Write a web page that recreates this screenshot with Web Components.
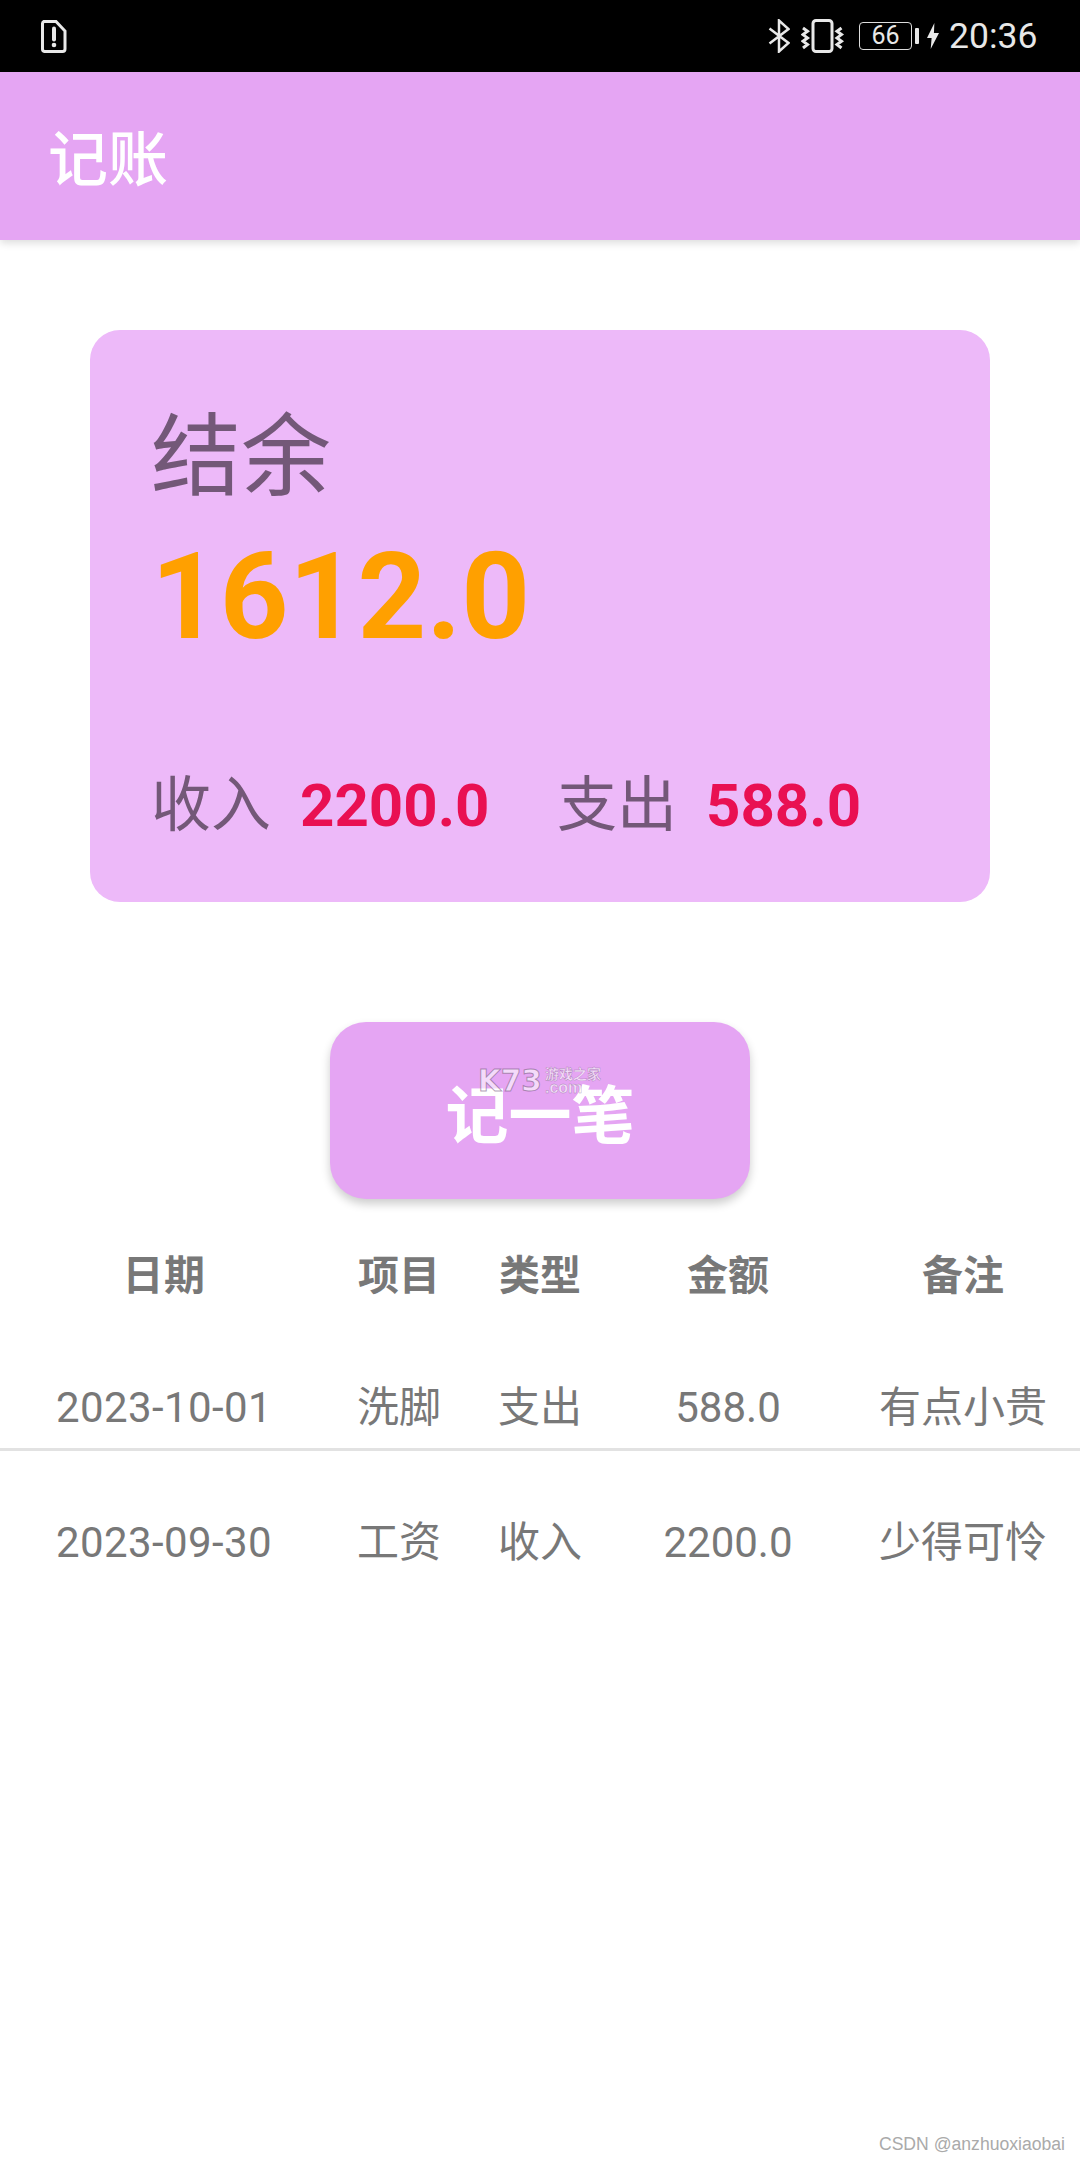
<!DOCTYPE html>
<html lang="zh">
<head>
<meta charset="utf-8">
<title>记账</title>
<style>
  html, body {
    margin: 0;
    background: #fff;
    font-family: Roboto, "Noto Sans CJK SC", sans-serif;
  }
  body {
    position: relative;
    width: 1080px;
    height: 2160px;
    overflow: hidden;
  }
</style>
</head>
<body>
<x-status-bar time="20:36" battery="66"></x-status-bar>
<x-app-bar>记账</x-app-bar>
<x-balance-card balance="1612.0" income="2200.0" expense="588.0"></x-balance-card>
<x-action-button>记一笔</x-action-button>
<x-record-table>
  <x-record-row head date="日期" item="项目" kind="类型" amount="金额" note="备注"></x-record-row>
  <x-record-row divider date="2023-10-01" item="洗脚" kind="支出" amount="588.0" note="有点小贵"></x-record-row>
  <x-record-row last date="2023-09-30" item="工资" kind="收入" amount="2200.0" note="少得可怜"></x-record-row>
</x-record-table>
<x-credit>CSDN @anzhuoxiaobai</x-credit>

<script>
class StatusBar extends HTMLElement {
  constructor() {
    super();
    this.attachShadow({mode: 'open'}).innerHTML = `
      <style>
        :host {
          display: flex;
          align-items: center;
          height: 72px;
          padding: 0 44px 0 41px;
          background: #000;
          color: #e8e8e8;
          font-family: Roboto, sans-serif;
        }
        .right { display: flex; align-items: center; margin-left: auto; }
        svg { display: block; }
        .battery {
          box-sizing: border-box;
          width: 53px;
          height: 28px;
          border: 1.5px solid #ddd;
          border-radius: 4px;
          font-size: 25px;
          line-height: 25px;
          text-align: center;
        }
        .time { width: 87px; margin-left: 10px; font-size: 35.5px; line-height: 72px; white-space: nowrap; }
      </style>
      <svg width="27" height="33" viewBox="0 0 27 33" fill="none">
        <path d="M3 1.500h12l9 9.500V29a2.500 2.500 0 0 1-2.500 2.500H3.500A2.500 2.500 0 0 1 1.500 29V4A2.500 2.500 0 0 1 3 1.500z" stroke="#e8e8e8" stroke-width="3"/>
        <path d="M13 8.500v11" stroke="#e8e8e8" stroke-width="4" stroke-linecap="round"/>
        <circle cx="13" cy="25" r="2.300" fill="#e8e8e8"/>
      </svg>
      <div class="right">
        <svg width="22" height="34" viewBox="0 0 22 34" fill="none" stroke="#e8e8e8" stroke-width="2.500">
          <path d="M1.500 9.500 20.500 24 11 32.500V1.500L20.500 10 1.500 24.500"/>
        </svg>
        <svg style="margin-left:11px" width="44" height="34" viewBox="0 0 44 34" fill="none" stroke="#e8e8e8">
          <rect x="12" y="1.500" width="19" height="31" rx="3" stroke-width="3"/>
          <path d="M2 9l4.500 3.300L2 15.600l4.500 3.300L2 22.200l4.500 3.300L2 29M40.500 9 36 12.300l4.500 3.300L36 18.900l4.500 3.300L36 25.500l4.500 3.500" stroke-width="3"/>
        </svg>
        <div class="battery" style="margin-left:14px">${this.getAttribute('battery')}</div>
        <svg style="margin-left:3px" width="4" height="16" viewBox="0 0 4 16"><rect width="4" height="16" rx="1" fill="#e8e8e8"/></svg>
        <svg style="margin-left:8px" width="12" height="26" viewBox="0 0 13 26" preserveAspectRatio="none"><path d="M8 0 0 15h5L4 26 13 10H7.500z" fill="#e8e8e8"/></svg>
        <div class="time">${this.getAttribute('time')}</div>
      </div>`;
  }
}

class AppBar extends HTMLElement {
  constructor() {
    super();
    this.attachShadow({mode: 'open'}).innerHTML = `
      <style>
        :host {
          display: block;
          position: relative;
          height: 168px;
          padding-left: 48px;
          background: #e5a5f3;
          box-shadow: 0 3px 8px rgba(0,0,0,.14);
          color: #fff;
          font: 500 60px/166px "Noto Sans CJK SC", sans-serif;
        }
      </style>
      <slot></slot>`;
  }
}

class BalanceCard extends HTMLElement {
  constructor() {
    super();
    this.attachShadow({mode: 'open'}).innerHTML = `
      <style>
        :host {
          display: block;
          box-sizing: border-box;
          height: 572px;
          margin: 90px 90px 0;
          padding: 73px 0 0 61px;
          border-radius: 30px;
          background: #edb9f9;
          color: #735878;
          font-family: Roboto, "Noto Sans CJK SC", sans-serif;
        }
        .title { font-size: 90px; line-height: 110px; }
        .balance {
          margin-top: 19px;
          color: #ffa000;
          font-size: 120px;
          font-weight: 700;
          line-height: 130px;
        }
        .totals {
          display: flex;
          align-items: center;
          margin-top: 104px;
          font-size: 60px;
          line-height: 80px;
        }
        b { display: block; margin-left: 29px; color: #e91052; font-size: 60px; }
        .income { width: 186px; }
        .expense-label { margin-left: 71px; }
      </style>
      <div class="title">结余</div>
      <div class="balance">${this.getAttribute('balance')}</div>
      <div class="totals">
        <span>收入</span><b class="income">${this.getAttribute('income')}</b>
        <span class="expense-label">支出</span><b>${this.getAttribute('expense')}</b>
      </div>`;
  }
}

class ActionButton extends HTMLElement {
  constructor() {
    super();
    this.attachShadow({mode: 'open'}).innerHTML = `
      <style>
        :host {
          display: flex;
          position: relative;
          align-items: center;
          justify-content: center;
          box-sizing: border-box;
          width: 420px;
          height: 177px;
          margin: 120px auto 0;
          border-radius: 36px;
          background: #e5a5f3;
          box-shadow: 0 5px 10px rgba(0,0,0,.2);
          color: #fff;
          font: 700 63px/176px "Noto Sans CJK SC", sans-serif;
        }
        /* site watermark burnt into the screenshot, it sits on top of the label */
        .mark {
          position: absolute;
          left: 148px;
          top: 45px;
          display: flex;
          color: rgba(255,255,255,.6);
          -webkit-text-stroke: 1px rgba(120,90,130,.6);
          font-family: "DejaVu Sans", "Noto Sans CJK SC", sans-serif;
        }
        .k {
          width: 67px;
          font-size: 31px;
          font-weight: 700;
          line-height: 26px;
          transform: scaleX(.95);
          transform-origin: left;
        }
        .side { font-size: 14px; line-height: 15px; white-space: nowrap; -webkit-text-stroke-width: .4px; }
        .com { font-family: "Liberation Sans", sans-serif; font-size: 16px; line-height: 12px; }
      </style>
      <slot></slot>
      <div class="mark">
        <div class="k">K73</div>
        <div class="side">游戏之家<div class="com">.com</div></div>
      </div>`;
  }
}

class RecordTable extends HTMLElement {
  constructor() {
    super();
    this.attachShadow({mode: 'open'}).innerHTML = `
      <style>
        :host { display: block; margin-top: 22px; }
      </style>
      <slot></slot>`;
  }
}

class RecordRow extends HTMLElement {
  constructor() {
    super();
    const keys = ['date', 'item', 'kind', 'amount', 'note'];
    this.attachShadow({mode: 'open'}).innerHTML = `
      <style>
        :host {
          display: grid;
          box-sizing: border-box;
          grid-template-columns: 328px 142px 140px 236px 234px;
          align-items: center;
          color: #787878;
          font: 400 42px/50px Roboto, "Noto Sans CJK SC", sans-serif;
          text-align: center;
        }
        :host([head]) { height: 110px; font-size: 41px; font-weight: 700; }
        :host([divider]) { height: 120px; padding-top: 37px; border-bottom: 3px solid #e2e2e2; }
        :host([last]) { height: 184px; }
        .date { letter-spacing: .4px; }
      </style>
      ${keys.map(key => `<div class="${key}">${this.getAttribute(key)}</div>`).join('')}`;
  }
}

class Credit extends HTMLElement {
  constructor() {
    super();
    this.attachShadow({mode: 'open'}).innerHTML = `
      <style>
        :host {
          position: absolute;
          right: 15px;
          bottom: 4px;
          color: #aaa;
          font: 17.6px/24px "Liberation Sans", sans-serif;
        }
      </style>
      <slot></slot>`;
  }
}

customElements.define('x-status-bar', StatusBar);
customElements.define('x-app-bar', AppBar);
customElements.define('x-balance-card', BalanceCard);
customElements.define('x-action-button', ActionButton);
customElements.define('x-record-table', RecordTable);
customElements.define('x-record-row', RecordRow);
customElements.define('x-credit', Credit);
</script>
</body>
</html>
